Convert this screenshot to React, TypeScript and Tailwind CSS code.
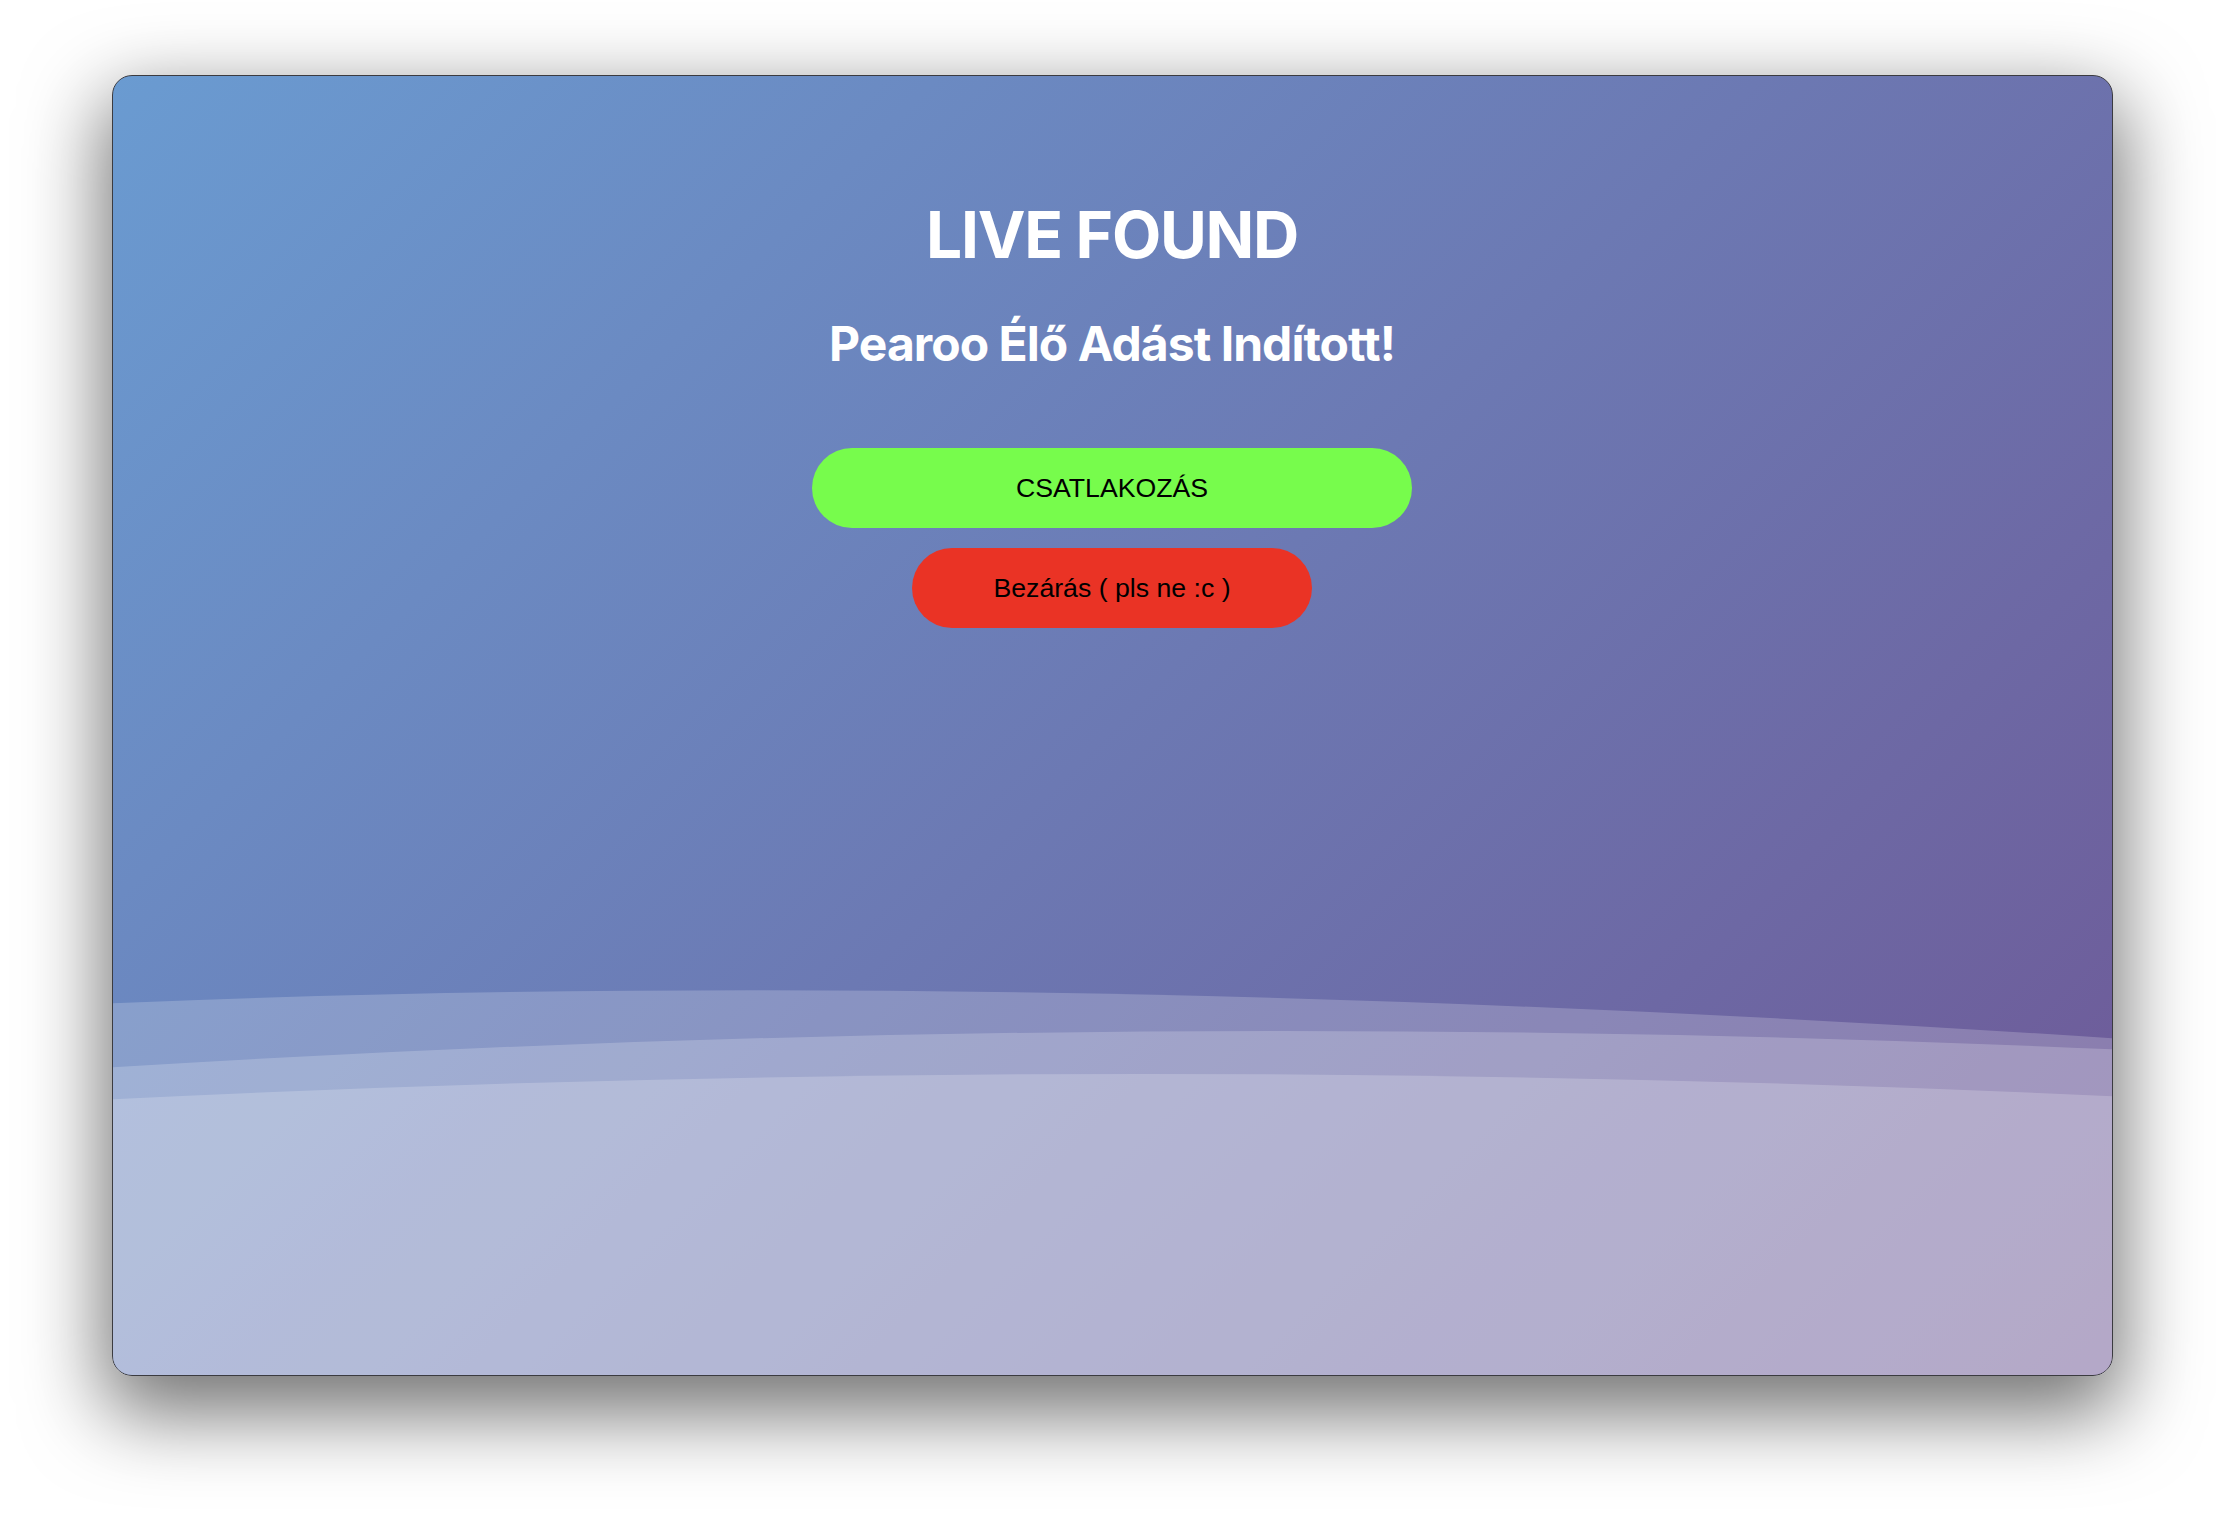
import * as React from 'react';

// decorative wave layers at the bottom of the window, in window coords (2000 x 1300)
const WAVES = [
  'M0 928 Q 900 890 2000 963 L2000 1300 L0 1300 Z',
  'M0 992 Q 1000 930 2000 974 L2000 1300 L0 1300 Z',
  'M0 1024 Q 1000 975 2000 1021 L2000 1300 L0 1300 Z',
];

function Waves() {
  return (
    <svg
      className="pointer-events-none absolute inset-0 h-full w-full"
      viewBox="0 0 2000 1300"
      preserveAspectRatio="none"
    >
      {WAVES.map((d) => (
        <path key={d} d={d} fill="#ffffff" fillOpacity={0.2} />
      ))}
    </svg>
  );
}

export default function App() {
  return (
    <div className="flex min-h-[1524px] w-full justify-center bg-white pt-[75px]">
      <div className="relative h-[1301px] w-[2001px] overflow-hidden rounded-[20px] border border-[#3b3b40] bg-[linear-gradient(135deg,#6a9bd1_0%,#6e5795_100%)] shadow-[0_30px_80px_8px_rgba(0,0,0,0.55)]">
        <Waves />
        <div className="relative flex flex-col items-center pt-[127px]">
          <h1 className="font-['Inter',sans-serif] text-[64px] font-bold leading-none tracking-[-0.02em] text-white">
            LIVE FOUND
          </h1>
          <h2 className="mt-[53px] font-['Inter',sans-serif] text-[48px] font-bold leading-none tracking-[-0.02em] text-white">
            Pearoo Élő Adást Indított!
          </h2>
          <div className="mt-[80px] flex flex-col items-center gap-[20px]">
            <button className="h-[80px] w-[600px] rounded-full bg-[#77fc4c] font-['Liberation_Sans',Arial,sans-serif] text-[26.67px] text-black">
              CSATLAKOZÁS
            </button>
            <button className="h-[80px] w-[400px] rounded-full bg-[#ea3325] font-['Liberation_Sans',Arial,sans-serif] text-[26.67px] text-black">
              Bezárás ( pls ne :c )
            </button>
          </div>
        </div>
      </div>
    </div>
  );
}
